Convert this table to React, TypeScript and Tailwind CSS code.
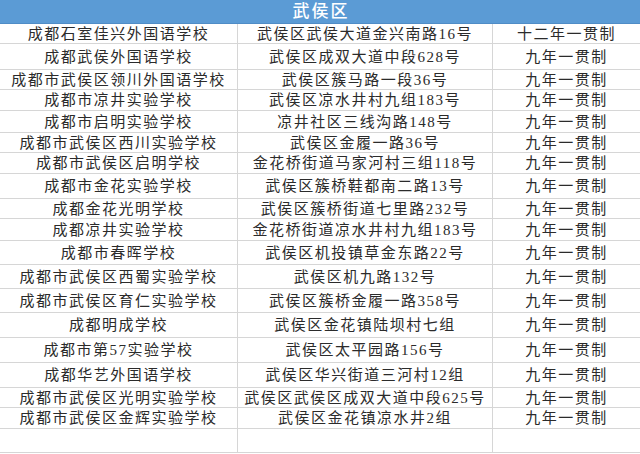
import React from 'react';

type Row = { name: string; addr: string; kind: string; h: string };

const rows: Row[] = [
  { name: '成都石室佳兴外国语学校', addr: '武侯区武侯大道金兴南路16号', kind: '十二年一贯制', h: 'h-[20px]' },
  { name: '成都武侯外国语学校', addr: '武侯区成双大道中段628号', kind: '九年一贯制', h: 'h-[26px]' },
  { name: '成都市武侯区领川外国语学校', addr: '武侯区簇马路一段36号', kind: '九年一贯制', h: 'h-[20px]' },
  { name: '成都市凉井实验学校', addr: '武侯区凉水井村九组183号', kind: '九年一贯制', h: 'h-[21px]' },
  { name: '成都市启明实验学校', addr: '凉井社区三线沟路148号', kind: '九年一贯制', h: 'h-[22px]' },
  { name: '成都市武侯区西川实验学校', addr: '武侯区金履一路36号', kind: '九年一贯制', h: 'h-[20px]' },
  { name: '成都市武侯区启明学校', addr: '金花桥街道马家河村三组118号', kind: '九年一贯制', h: 'h-[21px]' },
  { name: '成都市金花实验学校', addr: '武侯区簇桥鞋都南二路13号', kind: '九年一贯制', h: 'h-[25px]' },
  { name: '成都金花光明学校', addr: '武侯区簇桥街道七里路232号', kind: '九年一贯制', h: 'h-[20px]' },
  { name: '成都凉井实验学校', addr: '金花桥街道凉水井村九组183号', kind: '九年一贯制', h: 'h-[22px]' },
  { name: '成都市春晖学校', addr: '武侯区机投镇草金东路22号', kind: '九年一贯制', h: 'h-[24px]' },
  { name: '成都市武侯区西蜀实验学校', addr: '武侯区机九路132号', kind: '九年一贯制', h: 'h-[24px]' },
  { name: '成都市武侯区育仁实验学校', addr: '武侯区簇桥金履一路358号', kind: '九年一贯制', h: 'h-[24px]' },
  { name: '成都明成学校', addr: '武侯区金花镇陆坝村七组', kind: '九年一贯制', h: 'h-[25px]' },
  { name: '成都市第57实验学校', addr: '武侯区太平园路156号', kind: '九年一贯制', h: 'h-[25px]' },
  { name: '成都华艺外国语学校', addr: '武侯区华兴街道三河村12组', kind: '九年一贯制', h: 'h-[25px]' },
  { name: '成都市武侯区光明实验学校', addr: '武侯区武侯区成双大道中段625号', kind: '九年一贯制', h: 'h-[20px]' },
  { name: '成都市武侯区金辉实验学校', addr: '武侯区金花镇凉水井2组', kind: '九年一贯制', h: 'h-[21px]' },
  { name: '', addr: '', kind: '', h: 'h-[24px]' },
];

const cell =
  'flex items-center justify-center whitespace-nowrap border-b border-[#d6d6d6] overflow-hidden text-[15px] tracking-[1.5px] pt-px';

const App = () => {
  return (
    <div
      className="w-[640px] h-[454px] overflow-hidden bg-white text-[#2b2b2b]"
      style={{ fontFamily: '"Liberation Serif", "Noto Sans CJK SC", serif' }}
    >
      {/* Title bar */}
      <div className="h-[24px] bg-[#5b9bd5] border-b border-[#4f8cc6] flex items-center justify-center">
        <span className="text-white text-[17px] font-medium tracking-[2px] pl-[2px]">武侯区</span>
      </div>

      {/* Table body */}
      <div className="grid grid-cols-[238px_255px_147px]">
        {rows.map((r, i) => (
          <React.Fragment key={i}>
            <div className={`${cell} ${r.h} border-r`}>{r.name}</div>
            <div className={`${cell} ${r.h} border-r`}>{r.addr}</div>
            <div className={`${cell} ${r.h}`}>{r.kind}</div>
          </React.Fragment>
        ))}
      </div>
    </div>
  );
};

export default App;
